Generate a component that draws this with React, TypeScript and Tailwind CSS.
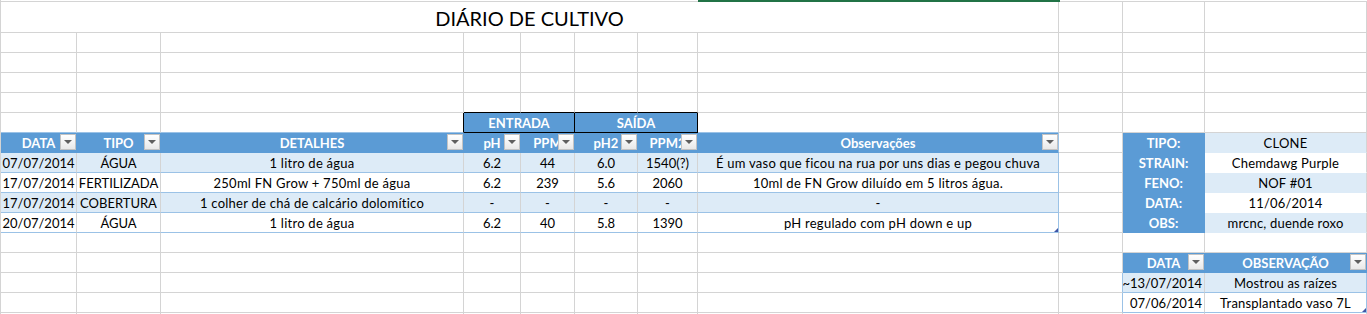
import clsx from "clsx";

const W = {
  A: "w-[76px]",
  B: "w-[84px]",
  C: "w-[303px]",
  D: "w-[57px]",
  E: "w-[54px]",
  F: "w-[63px]",
  G: "w-[60px]",
  H: "w-[361px]",
  I: "w-[64px]",
  J: "w-[82px]",
  K: "w-[162px]",
};

const plain = "border-r-[#d4d4d4] border-b-[#d4d4d4]";

interface CellProps {
  w: string;
  className?: string;
  children?: React.ReactNode;
}

function Cell({ w, className, children }: Readonly<CellProps>) {
  return (
    <div
      className={clsx(
        "relative shrink-0 h-full pt-[2px] border-r border-b flex items-center justify-center overflow-hidden whitespace-nowrap",
        w,
        className ?? plain
      )}
    >
      {children}
    </div>
  );
}

function Drop() {
  return (
    <span className="absolute right-0 top-[1px] w-[16px] h-[16px] border border-[#c3c3c3] bg-gradient-to-b from-white to-[#e9e9e9] flex items-center justify-center">
      <svg width="8" height="4" viewBox="0 0 8 4">
        <polygon points="0,0 8,0 4,4" fill="#5f5f5f" />
      </svg>
    </span>
  );
}

function Handle() {
  return (
    <svg className="absolute right-0 bottom-0" width="4" height="4" viewBox="0 0 4 4">
      <polygon points="4,0 4,4 0,4" fill="#3f55a5" />
    </svg>
  );
}

function GridLeft() {
  // empty A..G cells of the rows under the main table
  return (
    <div className="flex h-[20px] -mt-[2px] -mb-px">
      <div className="w-[76px] h-full border-r border-[#d4d4d4]" />
      <div className="w-[84px] h-full border-r border-[#d4d4d4]" />
      <div className="w-[303px] h-full border-r border-[#d4d4d4]" />
      <div className="w-[57px] h-full border-r border-[#d4d4d4]" />
      <div className="w-[54px] h-full border-r border-[#d4d4d4]" />
      <div className="w-[63px] h-full border-r border-[#d4d4d4]" />
      <div className="w-[60px] h-full border-r border-[#d4d4d4]" />
    </div>
  );
}

function EmptyRow({ blackBottom = false }: { blackBottom?: boolean }) {
  const dg = blackBottom ? "border-r-[#d4d4d4] border-b-black" : plain;
  return (
    <div className="flex h-[20px]">
      <Cell w={W.A} />
      <Cell w={W.B} />
      <Cell w={W.C} />
      <Cell w={W.D} className={dg} />
      <Cell w={W.E} className={dg} />
      <Cell w={W.F} className={dg} />
      <Cell w={W.G} className={dg} />
      <Cell w={W.H} />
      <Cell w={W.I} />
      <Cell w={W.J} />
      <Cell w={W.K} />
    </div>
  );
}

const entries = [
  { data: "07/07/2014", tipo: "ÁGUA", det: "1 litro de água", ph: "6.2", ppm: "44", ph2: "6.0", ppm2: "1540(?)", obs: "É um vaso que ficou na rua por uns dias e pegou chuva" },
  { data: "17/07/2014", tipo: "FERTILIZADA", det: "250ml FN Grow + 750ml de água", ph: "6.2", ppm: "239", ph2: "5.6", ppm2: "2060", obs: "10ml de FN Grow diluído em 5 litros água." },
  { data: "17/07/2014", tipo: "COBERTURA", det: "1 colher de chá de calcário dolomítico", ph: "-", ppm: "-", ph2: "-", ppm2: "-", obs: "-" },
  { data: "20/07/2014", tipo: "ÁGUA", det: "1 litro de água", ph: "6.2", ppm: "40", ph2: "5.8", ppm2: "1390", obs: "pH regulado com pH down e up" },
];

const info = [
  ["TIPO:", "CLONE"],
  ["STRAIN:", "Chemdawg Purple"],
  ["FENO:", "NOF #01"],
  ["DATA:", "11/06/2014"],
  ["OBS:", "mrcnc, duende roxo"],
];

const notes = [
  ["~13/07/2014", "Mostrou as raízes"],
  ["07/06/2014", "Transplantado vaso 7L"],
];

const head = "bg-[#5b9bd5] border-r-[#5b9bd5] border-b-[#5b9bd5] text-white font-bold";

export default function App() {
  return (
    <div className="w-[1367px] h-[314px] overflow-hidden bg-white border-l border-[#d4d4d4] font-['Lato',sans-serif] text-[13px] text-black">
      <div className="flex h-[2px]">
        <div className="w-[697px] border-b border-[#d4d4d4]" />
        <div className="w-[362px] bg-[#217346]" />
        <div className="flex-1 border-b border-[#d4d4d4]" />
      </div>

      <div className="flex h-[31px]">
        <Cell w="w-[1058px]" className={clsx(plain, "items-end pb-[2px]")}>
          <span className="text-[20px] leading-[24px]">DIÁRIO DE CULTIVO</span>
        </Cell>
        <Cell w={W.I} />
        <Cell w={W.J} />
        <Cell w={W.K} />
      </div>

      <EmptyRow />
      <EmptyRow />
      <EmptyRow />
      <EmptyRow blackBottom />

      <div className="flex h-[20px]">
        <Cell w={W.A} className="border-r-[#d4d4d4] border-b-[#9bc2e6]" />
        <Cell w={W.B} className="border-r-[#d4d4d4] border-b-[#9bc2e6]" />
        <Cell w={W.C} className="border-r-black border-b-[#9bc2e6]" />
        <Cell w="w-[111px]" className="bg-[#5b9bd5] border-r-black border-b-black text-white font-bold">
          ENTRADA
        </Cell>
        <Cell w="w-[123px]" className="bg-[#5b9bd5] border-r-black border-b-black text-white font-bold">
          SAÍDA
        </Cell>
        <Cell w={W.H} className="border-r-[#d4d4d4] border-b-[#9bc2e6]" />
        <Cell w={W.I} />
        <Cell w={W.J} />
        <Cell w={W.K} />
      </div>

      <div className="flex h-[20px]">
        <Cell w={W.A} className={head}>DATA<Drop /></Cell>
        <Cell w={W.B} className={head}>TIPO<Drop /></Cell>
        <Cell w={W.C} className={head}>DETALHES<Drop /></Cell>
        <Cell w={W.D} className={head}>pH<Drop /></Cell>
        <Cell w={W.E} className={head}>PPM<Drop /></Cell>
        <Cell w={W.F} className={head}>pH2<Drop /></Cell>
        <Cell w={W.G} className={head}>PPM2<Drop /></Cell>
        <Cell w={W.H} className={clsx(head, "border-r-[#9bc2e6]")}>Observações<Drop /></Cell>
        <Cell w={W.I} />
        <Cell w={W.J} className={head}>{info[0][0]}</Cell>
        <Cell w={W.K} className="bg-[#ddebf7] border-r-[#d4d4d4] border-b-[#ddebf7] tracking-[0.2px]">{info[0][1]}</Cell>
      </div>

      {entries.map((e, i) => {
        const light = i % 2 === 0;
        const bg = light ? "bg-[#ddebf7]" : "bg-white";
        const c = clsx(bg, "border-r-[#d4d4d4] border-b-[#9bc2e6]");
        const kLight = i % 2 === 1;
        return (
          <div key={i} className="flex h-[20px]">
            <Cell w={W.A} className={c}>{e.data}</Cell>
            <Cell w={W.B} className={c}>{e.tipo}</Cell>
            <Cell w={W.C} className={clsx(c, "tracking-[0.25px]")}>{e.det}</Cell>
            <Cell w={W.D} className={c}>{e.ph}</Cell>
            <Cell w={W.E} className={c}>{e.ppm}</Cell>
            <Cell w={W.F} className={c}>{e.ph2}</Cell>
            <Cell w={W.G} className={c}>{e.ppm2}</Cell>
            <Cell w={W.H} className={clsx(bg, "border-r-[#9bc2e6] border-b-[#9bc2e6] tracking-[0.25px]")}>
              {e.obs}
              {i === entries.length - 1 && <Handle />}
            </Cell>
            <Cell w={W.I} />
            <Cell w={W.J} className={head}>{info[i + 1][0]}</Cell>
            <Cell
              w={W.K}
              className={clsx(
                "tracking-[0.2px]",
                kLight
                  ? "bg-[#ddebf7] border-r-[#d4d4d4] border-b-[#ddebf7]"
                  : "bg-white border-r-[#d4d4d4] border-b-white"
              )}
            >
              {info[i + 1][1]}
            </Cell>
          </div>
        );
      })}

      <EmptyRow />

      <div className="flex h-[20px]">
        <Cell w="w-[1058px]" className="border-r-[#d4d4d4] border-b-[#d4d4d4] justify-start">
          <GridLeft />
        </Cell>
        <Cell w={W.I} />
        <Cell w={W.J} className={head}>DATA<Drop /></Cell>
        <Cell w={W.K} className={head}>OBSERVAÇÃO<Drop /></Cell>
      </div>

      {notes.map((n, i) => {
        const bg = i === 0 ? "bg-[#ddebf7]" : "bg-white";
        return (
          <div key={i} className="flex h-[20px]">
            <Cell w="w-[1058px]" className="border-r-[#d4d4d4] border-b-[#d4d4d4] justify-start">
              <GridLeft />
            </Cell>
            <Cell w={W.I} className="border-r-[#9bc2e6] border-b-[#d4d4d4]" />
            <Cell w={W.J} className={clsx(bg, "border-r-[#d4d4d4] border-b-[#9bc2e6] justify-end pr-[2px]")}>
              {n[0]}
            </Cell>
            <Cell w={W.K} className={clsx(bg, "border-r-[#9bc2e6] border-b-[#9bc2e6] tracking-[0.2px]")}>
              {n[1]}
              {i === notes.length - 1 && <Handle />}
            </Cell>
          </div>
        );
      })}

      <EmptyRow />
    </div>
  );
}
